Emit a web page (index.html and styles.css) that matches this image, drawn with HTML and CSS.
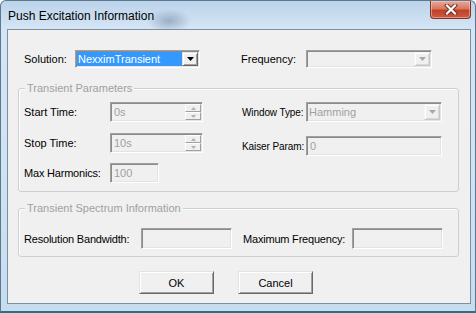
FILE: index.html
```html
<!DOCTYPE html>
<html lang="en">
<head>
  <meta charset="UTF-8">
  <meta name="viewport" content="width=device-width, initial-scale=1.0">
  <title>Push Excitation Information</title>
  <link rel="stylesheet" href="styles.css">
</head>
<body>
  <div class="window">
    <div class="titlebar">
      <span class="title">Push Excitation Information</span>
      <button class="close" aria-label="Close">
        <svg width="14" height="11" viewBox="0 0 14 11">
          <path d="M3 1.5 L11 9.5 M11 1.5 L3 9.5" stroke="#6a2a22" stroke-width="4" stroke-linecap="square"/>
          <path d="M3 1.5 L11 9.5 M11 1.5 L3 9.5" stroke="#ffffff" stroke-width="2.2" stroke-linecap="square"/>
        </svg>
      </button>
    </div>

    <div class="client">
      <!-- Solution / frequency row -->
      <div class="row row-top">
        <span class="lbl lbl-solution">Solution:</span>
        <div class="combo combo-solution">
          <span class="value selected">NexximTransient</span>
          <span class="drop"><svg width="7" height="4" viewBox="0 0 7 4"><polygon points="0,0 7,0 3.5,4" fill="#000"/></svg></span>
        </div>
        <span class="lbl lbl-freq">Frequency:</span>
        <div class="combo disabled combo-freq">
          <span class="value"></span>
          <span class="drop"><svg width="7" height="4" viewBox="0 0 7 4"><polygon points="0,0 7,0 3.5,4" fill="#a8a8a8"/></svg></span>
        </div>
      </div>

      <!-- Transient parameters -->
      <div class="group group-params">
        <span class="legend">Transient Parameters</span>
        <div class="col col-left">
          <div class="row">
            <span class="lbl lbl-left">Start Time:</span>
            <div class="edit spin-edit">
              <span class="value">0s</span>
              <span class="spin">
                <span class="spin-btn"><svg width="5" height="3" viewBox="0 0 5 3"><polygon points="0,3 5,3 2.5,0" fill="#b0b0b0"/></svg></span>
                <span class="spin-btn"><svg width="5" height="3" viewBox="0 0 5 3"><polygon points="0,0 5,0 2.5,3" fill="#b0b0b0"/></svg></span>
              </span>
            </div>
          </div>
          <div class="row">
            <span class="lbl lbl-left">Stop Time:</span>
            <div class="edit spin-edit">
              <span class="value">10s</span>
              <span class="spin">
                <span class="spin-btn"><svg width="5" height="3" viewBox="0 0 5 3"><polygon points="0,3 5,3 2.5,0" fill="#b0b0b0"/></svg></span>
                <span class="spin-btn"><svg width="5" height="3" viewBox="0 0 5 3"><polygon points="0,0 5,0 2.5,3" fill="#b0b0b0"/></svg></span>
              </span>
            </div>
          </div>
          <div class="row row-harm">
            <span class="lbl lbl-left lbl-narrow">Max Harmonics:</span>
            <div class="edit edit-harm"><span class="value">100</span></div>
          </div>
        </div>
        <div class="col col-right">
          <div class="row">
            <span class="lbl lbl-right">Window Type:</span>
            <div class="combo disabled combo-window">
              <span class="value">Hamming</span>
              <span class="drop"><svg width="7" height="4" viewBox="0 0 7 4"><polygon points="0,0 7,0 3.5,4" fill="#a8a8a8"/></svg></span>
            </div>
          </div>
          <div class="row">
            <span class="lbl lbl-right">Kaiser Param:</span>
            <div class="edit edit-kaiser"><span class="value">0</span></div>
          </div>
        </div>
      </div>

      <!-- Spectrum information -->
      <div class="group group-spectrum">
        <span class="legend">Transient Spectrum Information</span>
        <div class="row">
          <span class="lbl lbl-res lbl-narrow">Resolution Bandwidth:</span>
          <div class="edit edit-wide"></div>
          <span class="lbl lbl-max lbl-narrow">Maximum Frequency:</span>
          <div class="edit edit-wide"></div>
        </div>
      </div>

      <div class="buttons">
        <button class="btn">OK</button>
        <button class="btn">Cancel</button>
      </div>
    </div>
  </div>
</body>
</html>
```

FILE: styles.css
```css
* {
  margin: 0;
  padding: 0;
  box-sizing: border-box;
}

body {
  width: 476px;
  height: 313px;
  overflow: hidden;
  font-family: "Liberation Sans", Arial, sans-serif;
  font-size: 11px;
  color: #000;
}

.window {
  width: 476px;
  height: 313px;
  display: flex;
  flex-direction: column;
  padding: 0 4px 0 6px;
  border: 1px solid #5c7891;
  border-bottom: 2px solid #2f6f80;
  border-radius: 6px 6px 0 0;
  background:
    radial-gradient(ellipse 22px 12px at 168px 20px, rgba(80, 100, 130, 0.4), rgba(80, 100, 130, 0)),
    linear-gradient(180deg, #bcd3ea 0, #d4e5f5 28px, #cfe2f3 60%, #c6dcef 100%);
}

/* Title bar */
.titlebar {
  height: 28px;
  display: flex;
  align-items: flex-start;
}

.title {
  padding: 8px 0 0 1px;
  font-size: 12px;
  line-height: 14px;
}

.close {
  margin-left: auto;
  width: 41px;
  height: 18px;
  border: 1px solid #7e3326;
  border-top: none;
  border-radius: 0 0 4px 4px;
  background: linear-gradient(180deg, #e9a99a 0, #d9775f 45%, #c1402a 55%, #cf5a40 100%);
  box-shadow: inset 0 0 0 1px rgba(255, 210, 200, 0.5);
  display: flex;
  align-items: center;
  justify-content: center;
}

/* Client area */
.client {
  height: 275px;
  border: 1px solid #7d8fa1;
  background: #f0f0f0;
  padding: 20px 0 0 10px;
  display: flex;
  flex-direction: column;
}

.row {
  display: flex;
  align-items: center;
}

.row-top {
  padding-left: 6px;
  height: 18px;
}

.lbl {
  flex: none;
  white-space: nowrap;
}

.lbl-narrow { letter-spacing: -0.2px; }

.lbl-solution { width: 51px; }
.lbl-freq { width: 65px; margin-left: 41px; }
.lbl-left { width: 86px; }
.lbl-right { width: 64px; font-size: 10px; letter-spacing: -0.1px; }
.lbl-res { width: 117px; }
.lbl-max { width: 109px; margin-left: 11px; }

/* Sunken edit boxes */
.edit, .combo {
  position: relative;
  flex: none;
  height: 20px;
  display: flex;
  align-items: center;
  border: 1px solid;
  border-color: #a0a0a0 #ffffff #ffffff #a0a0a0;
  box-shadow: inset 1px 1px 0 #8a8a8a, inset -1px -1px 0 #e3e3e3;
  background: #f0f0f0;
  color: #a0a0a0;
}

.value {
  padding-left: 3px;
  white-space: nowrap;
}

.spin-edit { width: 93px; }
.edit-harm { width: 49px; }
.edit-kaiser { width: 136px; }
.edit-wide { width: 91px; height: 21px; }

.spin {
  margin-left: auto;
  margin-right: 1px;
  width: 16px;
  height: 16px;
  display: flex;
  flex-direction: column;
}

.spin-btn {
  flex: 1;
  display: flex;
  align-items: center;
  justify-content: center;
  border: 1px solid;
  border-color: #ffffff #a0a0a0 #a0a0a0 #ffffff;
  background: #f0f0f0;
}

/* Combo boxes */
.combo { height: 18px; }
.combo-solution { width: 125px; background: #fff; }
.combo-freq { width: 126px; }
.combo-window { width: 136px; height: 20px; }

.combo .value {
  flex: 1;
  align-self: stretch;
  display: flex;
  align-items: center;
  margin: 1px 0 1px 1px;
  padding-left: 1px;
}

.combo .selected {
  background: #3399ff;
  color: #fff;
}

.drop {
  flex: none;
  width: 16px;
  align-self: stretch;
  margin: 1px 1px 1px 0;
  display: flex;
  align-items: center;
  justify-content: center;
  border: 1px solid;
  border-color: #e3e3e3 #696969 #696969 #e3e3e3;
  box-shadow: inset 1px 1px 0 #fff, inset -1px -1px 0 #a0a0a0;
  background: #f0f0f0;
}

.combo.disabled .drop {
  border-color: #f4f4f4 #c8c8c8 #c8c8c8 #f4f4f4;
  box-shadow: inset 1px 1px 0 #fff, inset -1px -1px 0 #d8d8d8;
}

/* Group boxes */
.group {
  position: relative;
  width: 441px;
  border: 1px solid #c9d0d5;
  border-radius: 3px;
  box-shadow: 1px 1px 0 #fff inset;
}

.legend {
  position: absolute;
  top: -7px;
  left: 6px;
  padding: 0 2px;
  background: #f0f0f0;
  color: #a0a0a0;
  line-height: 13px;
}

.group-params {
  margin-top: 20px;
  height: 104px;
  padding: 13px 0 0 5px;
  display: flex;
}

.col {
  display: flex;
  flex-direction: column;
}

.col-left {
  width: 218px;
  gap: 11px;
}

.col-left .row-harm { margin-top: -1px; }

.col-right { gap: 14px; }

.group-spectrum {
  margin-top: 16px;
  height: 49px;
  padding: 19px 0 0 5px;
}

/* Buttons */
.buttons {
  margin-top: 14px;
  padding-left: 121px;
  display: flex;
  gap: 24px;
}

.btn {
  width: 75px;
  height: 23px;
  font-family: inherit;
  font-size: 11px;
  color: #000;
  background: #f0f0f0;
  border: 1px solid;
  border-color: #e3e3e3 #696969 #696969 #e3e3e3;
  box-shadow: inset 1px 1px 0 #fff, inset -1px -1px 0 #a0a0a0;
}
```
